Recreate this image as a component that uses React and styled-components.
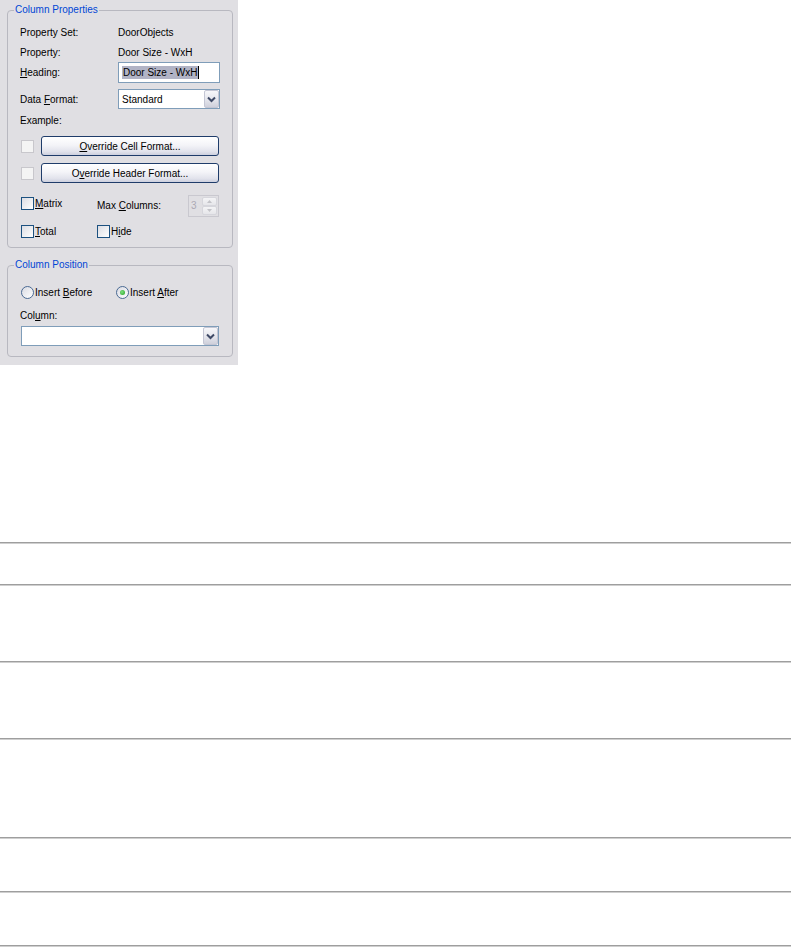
import React from 'react';
import styled, { createGlobalStyle } from 'styled-components';

const GlobalStyle = createGlobalStyle`
  html, body { margin: 0; padding: 0; background: #ffffff; }
  body { font-family: "Liberation Sans", Arial, sans-serif; }
`;

const Page = styled.div`
  width: 792px;
  display: flex;
  flex-direction: column;
`;

const Panel = styled.div`
  width: 238px;
  height: 365px;
  box-sizing: border-box;
  background: #e0dfe3;
  padding: 10px 5px 0 7px;
  display: flex;
  flex-direction: column;
  gap: 17px;
  font-family: "Liberation Sans", Arial, sans-serif;
  font-size: 10px;
  line-height: 13px;
  color: #000;
`;

const GroupBox = styled.div`
  position: relative;
  border: 1px solid #b8b8c0;
  border-radius: 4px;
  padding: ${p => p.$pad};
  display: flex;
  flex-direction: column;
`;

const GroupTitle = styled.span`
  position: absolute;
  top: -8px;
  left: 6px;
  padding: 0 1px;
  background: #e0dfe3;
  color: #0046d5;
  line-height: 13px;
`;

const FieldRow = styled.div`
  display: grid;
  grid-template-columns: 98px 102px;
  align-items: center;
  height: ${p => p.$h || 20}px;
  margin-top: ${p => p.$mt || 0}px;
`;

const Label = styled.span`
  white-space: nowrap;
`;

const TextBox = styled.div`
  height: 21px;
  box-sizing: border-box;
  border: 1px solid #7f9db9;
  background: #fff;
  padding-left: 3px;
  display: flex;
  align-items: center;
`;

const Selection = styled.span`
  background: #b1b3c5;
  padding: 0 1px;
  line-height: 13px;
  white-space: nowrap;
`;

const Caret = styled.span`
  display: inline-block;
  width: 1px;
  height: 13px;
  background: #000;
`;

const Combo = styled.div`
  height: 20px;
  box-sizing: border-box;
  border: 1px solid #7f9db9;
  background: #fff;
  display: flex;
  align-items: center;
  padding-left: 3px;
  margin: ${p => p.$margin || '0'};
`;

const ComboText = styled.span`
  flex: 1;
`;

const DropButton = styled.div`
  width: 15px;
  align-self: stretch;
  box-sizing: border-box;
  border: 1px solid #c4c6d4;
  border-radius: 2px;
  background: linear-gradient(#f7f7fa, #e4e5ec 55%, #cfd0db);
  display: flex;
  align-items: center;
  justify-content: center;
`;

const ButtonRow = styled.div`
  display: flex;
  align-items: center;
  gap: 7px;
  height: 20px;
  margin-top: ${p => p.$mt || 0}px;
  padding-left: 1px;
`;

const PushButton = styled.div`
  width: 178px;
  height: 20px;
  box-sizing: border-box;
  border: 1px solid #1f3c6a;
  border-radius: 3px;
  background: linear-gradient(#ffffff, #f4f4f8 45%, #e2e3ec 80%, #cdd0de);
  display: flex;
  align-items: center;
  justify-content: center;
  white-space: nowrap;
`;

const Box = styled.span`
  width: 13px;
  height: 13px;
  box-sizing: border-box;
  flex: none;
  border: 1px solid ${p => (p.$disabled ? '#c8c7cc' : '#1c5180')};
  background: ${p => (p.$disabled ? '#f4f4f4' : 'linear-gradient(135deg, #dcdde3, #ffffff)')};
`;

const Check = styled.span`
  display: flex;
  align-items: center;
  gap: 1px;
  height: 13px;
  margin-top: ${p => p.$mt || 0}px;
  white-space: nowrap;
`;

const OptionRow = styled.div`
  display: grid;
  grid-template-columns: 76px 1fr 32px;
  align-items: start;
  height: ${p => p.$h}px;
  margin-top: ${p => p.$mt}px;
  padding-left: 1px;
`;

const SideLabel = styled.span`
  line-height: 22px;
  white-space: nowrap;
`;

const Spin = styled.div`
  width: 31px;
  height: 22px;
  box-sizing: border-box;
  border: 1px solid #c9c8cf;
  background: #e0dfe3;
  display: flex;
  color: #aca9b4;
`;

const SpinValue = styled.span`
  flex: 1;
  padding-left: 2px;
  line-height: 20px;
`;

const SpinButtons = styled.div`
  width: 15px;
  display: flex;
  flex-direction: column;
  gap: 0;
  padding: 1px 1px 1px 0;
`;

const SpinHalf = styled.div`
  flex: 1;
  box-sizing: border-box;
  border: 1px solid #d6d6dc;
  border-radius: 2px;
  background: linear-gradient(#f4f4f6, #e6e6ea);
  display: flex;
  align-items: center;
  justify-content: center;
`;

const RadioRow = styled.div`
  display: grid;
  grid-template-columns: 95px 1fr;
  height: 13px;
  padding-left: 1px;
`;

const Radio = styled.span`
  width: 13px;
  height: 13px;
  box-sizing: border-box;
  flex: none;
  border-radius: 50%;
  border: 1px solid #4a6a93;
  background: linear-gradient(135deg, #d9dae2, #ffffff);
  display: flex;
  align-items: center;
  justify-content: center;
`;

const RadioDot = styled.span`
  width: 5px;
  height: 5px;
  border-radius: 50%;
  background: radial-gradient(circle at 40% 40%, #7fe07f, #21a121);
`;

const Rules = styled.div`
  margin-top: 177px;
  width: 791px;
  display: flex;
  flex-direction: column;
`;

const RuleRow = styled.div`
  height: ${p => p.$h}px;
  box-sizing: border-box;
  border-top: 1px solid #9e9e9e;
  box-shadow: inset 0 1px 0 #cfcfcf;
`;

const Chevron = () => (
  <svg width="9" height="7" viewBox="0 0 9 7">
    <path d="M1 1.5 L4.5 5 L8 1.5" fill="none" stroke="#3f4a66" strokeWidth="2" />
  </svg>
);

const Arrow = ({ up }) => (
  <svg width="5" height="3" viewBox="0 0 5 3">
    <path d={up ? 'M0 3 L2.5 0 L5 3 Z' : 'M0 0 L2.5 3 L5 0 Z'} fill="#c3c3c8" />
  </svg>
);

const ruleHeights = [42, 77, 77, 99, 54, 54, 2];

export default function App() {
  return (
    <Page>
      <GlobalStyle />
      <Panel>
        <GroupBox $pad="11px 12px 9px 12px">
          <GroupTitle>Column Properties</GroupTitle>
          <FieldRow>
            <Label>Property Set:</Label>
            <Label>DoorObjects</Label>
          </FieldRow>
          <FieldRow>
            <Label>Property:</Label>
            <Label>Door Size - WxH</Label>
          </FieldRow>
          <FieldRow $h={21}>
            <Label><u>H</u>eading:</Label>
            <TextBox>
              <Selection>Door Size - WxH</Selection>
              <Caret />
            </TextBox>
          </FieldRow>
          <FieldRow $mt={6}>
            <Label>Data <u>F</u>ormat:</Label>
            <Combo>
              <ComboText>Standard</ComboText>
              <DropButton><Chevron /></DropButton>
            </Combo>
          </FieldRow>
          <FieldRow $mt={1}>
            <Label>Example:</Label>
          </FieldRow>
          <ButtonRow $mt={6}>
            <Box $disabled />
            <PushButton><span><u>O</u>verride Cell Format...</span></PushButton>
          </ButtonRow>
          <ButtonRow $mt={7}>
            <Box $disabled />
            <PushButton><span>O<u>v</u>erride Header Format...</span></PushButton>
          </ButtonRow>
          <OptionRow $h={22} $mt={12}>
            <Check $mt={2}><Box /><span><u>M</u>atrix</span></Check>
            <SideLabel>Max <u>C</u>olumns:</SideLabel>
            <Spin>
              <SpinValue>3</SpinValue>
              <SpinButtons>
                <SpinHalf><Arrow up /></SpinHalf>
                <SpinHalf><Arrow /></SpinHalf>
              </SpinButtons>
            </Spin>
          </OptionRow>
          <OptionRow $h={13} $mt={8}>
            <Check><Box /><span><u>T</u>otal</span></Check>
            <Check><Box /><span>H<u>i</u>de</span></Check>
          </OptionRow>
        </GroupBox>
        <GroupBox $pad="20px 12px 10px 12px">
          <GroupTitle>Column Position</GroupTitle>
          <RadioRow>
            <Check><Radio /><span>Insert <u>B</u>efore</span></Check>
            <Check><Radio><RadioDot /></Radio><span>Insert <u>A</u>fter</span></Check>
          </RadioRow>
          <FieldRow $mt={6}>
            <Label>Col<u>u</u>mn:</Label>
          </FieldRow>
          <Combo $margin="1px 1px 0 1px">
            <ComboText />
            <DropButton><Chevron /></DropButton>
          </Combo>
        </GroupBox>
      </Panel>
      <Rules>
        {ruleHeights.map((h, i) => (
          <RuleRow key={i} $h={h} />
        ))}
      </Rules>
    </Page>
  );
}
